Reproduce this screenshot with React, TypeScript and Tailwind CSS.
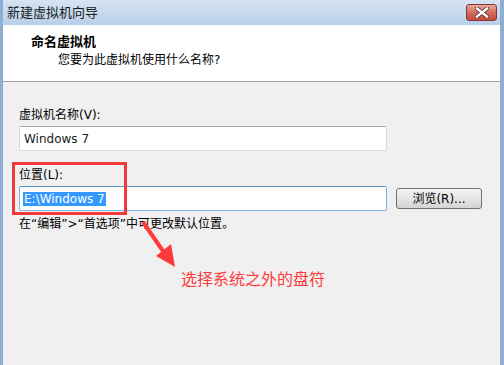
import React from 'react';

const font = { fontFamily: '"DejaVu Sans", "Noto Sans CJK SC", sans-serif' };

const App: React.FC = () => {
  return (
    <div
      className="relative w-[504px] h-[365px] overflow-hidden bg-[#f0f0f0] border-l-[3px] border-r-[4px] border-[#8eaed6] text-[12px] text-black"
      style={font}
    >
      {/* Title bar */}
      <div className="h-[25px] flex items-center justify-between pl-[4px] pr-[3px] bg-gradient-to-b from-[#d6e3f2] to-[#b8cfe9]">
        <span className="text-[13px] text-[#1b1b1b] leading-none">新建虚拟机向导</span>
        <button className="w-[31px] h-[17px] rounded-[3px] border border-[#7e3a33] bg-gradient-to-b from-[#e9a99b] via-[#d26c5c] to-[#c44a3c] flex items-center justify-center">
          <svg width="14" height="11" viewBox="0 0 14 11">
            <path d="M2 1.5 L12 9.5 M12 1.5 L2 9.5" stroke="#4a2a26" strokeWidth="4" strokeLinecap="square" />
            <path d="M2 1.5 L12 9.5 M12 1.5 L2 9.5" stroke="#ffffff" strokeWidth="2.4" strokeLinecap="square" />
          </svg>
        </button>
      </div>

      {/* Header */}
      <div className="h-[57px] bg-white border-b border-[#a0a0a0] pl-[28px] pt-[9px]">
        <div className="font-bold text-[13px] leading-[16px]">命名虚拟机</div>
        <div className="pl-[27px] mt-[2px] leading-[16px]">您要为此虚拟机使用什么名称?</div>
      </div>

      {/* Body */}
      <div className="pl-[16px]">
        <div className="mt-[25px] leading-[16px]">虚拟机名称(V):</div>
        <div className="mt-[3px] w-[368px] h-[25px] bg-white border border-[#d5d8dd] border-t-[#abadb3] rounded-[2px] flex items-center pl-[4px] text-[#1a1a1a]">
          Windows 7
        </div>

        <div className="mt-[16px] leading-[16px]">位置(L):</div>
        <div className="mt-[3px] flex items-center gap-[9px]">
          <div className="w-[368px] h-[25px] bg-white border border-[#7eb4ea] border-t-[#5c93bc] rounded-[2px] flex items-center pl-[3px]">
            <span className="bg-[#3399ff] text-white leading-[14px] px-[1px]">E:\Windows 7</span>
          </div>
          <button className="w-[86px] h-[21px] rounded-[3px] border border-[#707070] bg-gradient-to-b from-[#f3f3f3] via-[#e6e6e6] to-[#d3d3d3] text-[12px] leading-none">
            浏览(R)...
          </button>
        </div>

        <div className="mt-[5px] leading-[16px]">在“编辑”&gt;“首选项”中可更改默认位置。</div>

        <div className="mt-[39px] pl-[162px] text-[16px] leading-[18px] text-[#ff3a3a]">选择系统之外的盘符</div>
      </div>

      {/* Annotation: highlight box and arrow */}
      <div className="absolute left-[9px] top-[162px] w-[115px] h-[53px] border-[3px] border-[#f23a3a]" />
      <svg className="absolute left-0 top-0" width="504" height="365" viewBox="0 0 504 365">
        <path d="M140 222 L162 254" stroke="#ff3a3a" strokeWidth="4" />
        <polygon points="153,256 168,244 172,267" fill="#ff3a3a" />
      </svg>
    </div>
  );
};

export default App;
